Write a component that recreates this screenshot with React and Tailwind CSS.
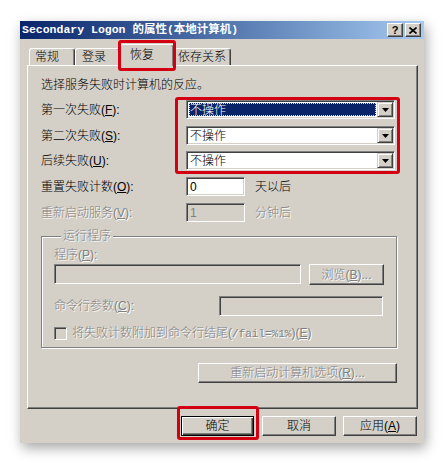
import React from 'react';

const raised =
  'border border-t-white border-l-white border-r-[#404040] border-b-[#404040] shadow-[inset_-1px_-1px_0_#808080]';
const sunken =
  'border border-t-[#808080] border-l-[#808080] border-r-white border-b-white shadow-[inset_1px_1px_0_#404040,inset_-1px_-1px_0_#d4d0c8]';
const disabled = 'text-[#808080] [text-shadow:1px_1px_0_#fff]';

const Mn = ({ children }) => <span className="underline">{children}</span>;

function Arrow() {
  return (
    <svg width="7" height="4" viewBox="0 0 7 4">
      <polygon points="0,0 7,0 3.5,4" fill="#000" />
    </svg>
  );
}

function Combo({ selected }) {
  return (
    <div className={`w-[209px] h-[19px] bg-white flex p-[1px] ${sunken}`}>
      <div className="flex-1 flex p-[1px]">
        <div
          className={`flex-1 flex items-center pl-[1px] leading-[14px] ${
            selected ? 'bg-[#0a246a] text-white outline outline-1 outline-dotted outline-[#e8e8a0] -outline-offset-1' : ''
          }`}
        >
          不操作
        </div>
      </div>
      <div className="w-[16px] h-full bg-[#d4d0c8] flex items-center justify-center border border-t-[#d4d0c8] border-l-[#d4d0c8] border-r-[#404040] border-b-[#404040] shadow-[inset_1px_1px_0_#fff,inset_-1px_-1px_0_#808080]">
        <Arrow />
      </div>
    </div>
  );
}

function Tab({ label, selected, w, pl }) {
  return (
    <div
      className={`${w} ${pl} flex ${selected ? 'h-[22px] -mb-[1px] relative z-10 pt-[3px]' : 'h-[17px] items-center'} bg-[#d4d0c8] border-t border-l border-r border-t-white border-l-white border-r-[#404040] rounded-t-[3px] shadow-[inset_-1px_0_0_#808080] leading-[14px]`}
    >
      {label}
    </div>
  );
}

export default function App() {
  return (
    <div className="w-[445px] h-[464px] bg-white pt-[21px] pl-[20px] font-['Liberation_Sans','Noto_Sans_CJK_SC',sans-serif] font-light text-[12px] text-black">
      <div className="relative w-[404px] h-[422px] bg-[#d4d0c8] flex flex-col shadow-[2px_5px_12px_rgba(0,0,0,0.35)]">
        {/* Title bar */}
        <div className="h-[18px] flex items-center pl-[2px] pr-[3px] bg-gradient-to-r from-[#0a246a] to-[#a6caf0]">
          <span className="text-white font-bold text-[11.5px] leading-[14px] font-['Liberation_Mono','Noto_Sans_CJK_SC',monospace]">
            Secondary Logon 的属性(本地计算机)
          </span>
          <div className="ml-auto flex gap-[2px]">
            <div className={`w-[16px] h-[14px] bg-[#d4d0c8] flex items-center justify-center font-bold text-[11px] leading-[12px] ${raised}`}>
              ?
            </div>
            <div className={`w-[16px] h-[14px] bg-[#d4d0c8] flex items-center justify-center ${raised}`}>
              <svg width="8" height="7" viewBox="0 0 8 7">
                <path d="M0.5 0.5 L7.5 6.5 M7.5 0.5 L0.5 6.5" stroke="#000" strokeWidth="1.6" />
              </svg>
            </div>
          </div>
        </div>

        {/* Tabs */}
        <div className="ml-[7px] w-[391px]">
          <div className="h-[26px] flex items-end pl-[2px]">
            <Tab label="常规" w="w-[46px]" pl="pl-[5px]" />
            <Tab label="登录" w="w-[45px]" pl="pl-[6px]" />
            <Tab label="恢复" w="w-[54px]" pl="pl-[9px]" selected />
            <Tab label="依存关系" w="w-[57px]" pl="pl-[3px]" />
          </div>

          {/* Panel */}
          <div className={`h-[344px] flex flex-col pl-[13px] ${raised}`}>
            <div className="mt-[12px] leading-[14px]">选择服务失败时计算机的反应。</div>

            <div className="mt-[8px] h-[19px] flex items-center">
              <span className="w-[145px] leading-[14px]">第一次失败(<Mn>F</Mn>):</span>
              <Combo selected />
            </div>
            <div className="mt-[7px] h-[19px] flex items-center">
              <span className="w-[145px] leading-[14px]">第二次失败(<Mn>S</Mn>):</span>
              <Combo />
            </div>
            <div className="mt-[6px] h-[19px] flex items-center">
              <span className="w-[145px] leading-[14px]">后续失败(<Mn>U</Mn>):</span>
              <Combo />
            </div>

            <div className="mt-[7px] h-[19px] flex items-center">
              <span className="w-[145px] leading-[14px]">重置失败计数(<Mn>O</Mn>):</span>
              <div className={`w-[59px] h-[19px] bg-white pl-[3px] flex items-center leading-[14px] ${sunken}`}>0</div>
              <span className="ml-[10px] leading-[14px]">天以后</span>
            </div>
            <div className="mt-[7px] h-[19px] flex items-center">
              <span className={`w-[145px] leading-[14px] ${disabled}`}>重新启动服务(<Mn>V</Mn>):</span>
              <div className={`w-[59px] h-[19px] bg-[#d4d0c8] pl-[3px] flex items-center leading-[14px] ${sunken} text-[#808080]`}>1</div>
              <span className={`ml-[10px] leading-[14px] ${disabled}`}>分钟后</span>
            </div>

            {/* Run program group */}
            <fieldset className="mt-[7px] w-[356px] border border-[#808080] shadow-[inset_1px_1px_0_#fff,1px_1px_0_#fff] pl-[12px] pb-[7px]">
              <legend className={`ml-[7px] px-[2px] bg-[#d4d0c8] leading-[14px] ${disabled}`}>运行程序</legend>
              <div className={`mt-[5px] leading-[14px] ${disabled}`}>程序(<Mn>P</Mn>):</div>
              <div className="mt-[2px] flex items-start">
                <div className={`w-[247px] h-[20px] bg-[#d4d0c8] ${sunken}`} />
                <div className={`ml-[8px] w-[75px] h-[21px] flex items-center justify-center leading-[14px] ${raised} ${disabled}`}>
                  浏览(<Mn>B</Mn>)...
                </div>
              </div>
              <div className="mt-[11px] h-[20px] flex items-center">
                <span className={`w-[165px] leading-[14px] ${disabled}`}>命令行参数(<Mn>C</Mn>):</span>
                <div className={`w-[164px] h-[20px] bg-[#d4d0c8] ${sunken}`} />
              </div>
              <div className="mt-[10px] h-[14px] flex items-center">
                <div className={`w-[13px] h-[13px] bg-[#d4d0c8] ${sunken}`} />
                <span className={`ml-[5px] leading-[14px] ${disabled}`}>
                  将失败计数附加到命令行结尾(<span className="font-['Liberation_Mono',monospace] text-[11px]">/fail=%1%</span>)(<Mn>E</Mn>)
                </span>
              </div>
            </fieldset>

            <div className={`mt-[15px] ml-[157px] w-[199px] h-[20px] flex items-center justify-center leading-[14px] ${raised} ${disabled}`}>
              重新启动计算机选项(<Mn>R</Mn>)...
            </div>
          </div>
        </div>

        {/* Dialog buttons */}
        <div className="mt-[7px] pr-[7px] flex justify-end">
          <div className="w-[73px] h-[20px] flex items-center justify-center leading-[14px] border border-black shadow-[inset_1px_1px_0_#fff,inset_-1px_-1px_0_#404040,inset_-2px_-2px_0_#808080]">
            确定
          </div>
          <div className={`ml-[8px] w-[74px] h-[20px] flex items-center justify-center leading-[14px] ${raised}`}>取消</div>
          <div className={`ml-[7px] w-[74px] h-[20px] flex items-center justify-center leading-[14px] ${raised}`}>
            应用(<Mn>A</Mn>)
          </div>
        </div>

        {/* Red annotation boxes */}
        <div className="absolute left-[98px] top-[19px] w-[58px] h-[31px] border-[3px] border-[#d40012] rounded-[3px] pointer-events-none z-20" />
        <div className="absolute left-[155px] top-[76px] w-[225px] h-[77px] border-[3px] border-[#d40012] rounded-[3px] pointer-events-none z-20" />
        <div className="absolute left-[157px] top-[385px] w-[82px] h-[34px] border-[3px] border-[#d40012] rounded-[3px] pointer-events-none z-20" />
      </div>
    </div>
  );
}
